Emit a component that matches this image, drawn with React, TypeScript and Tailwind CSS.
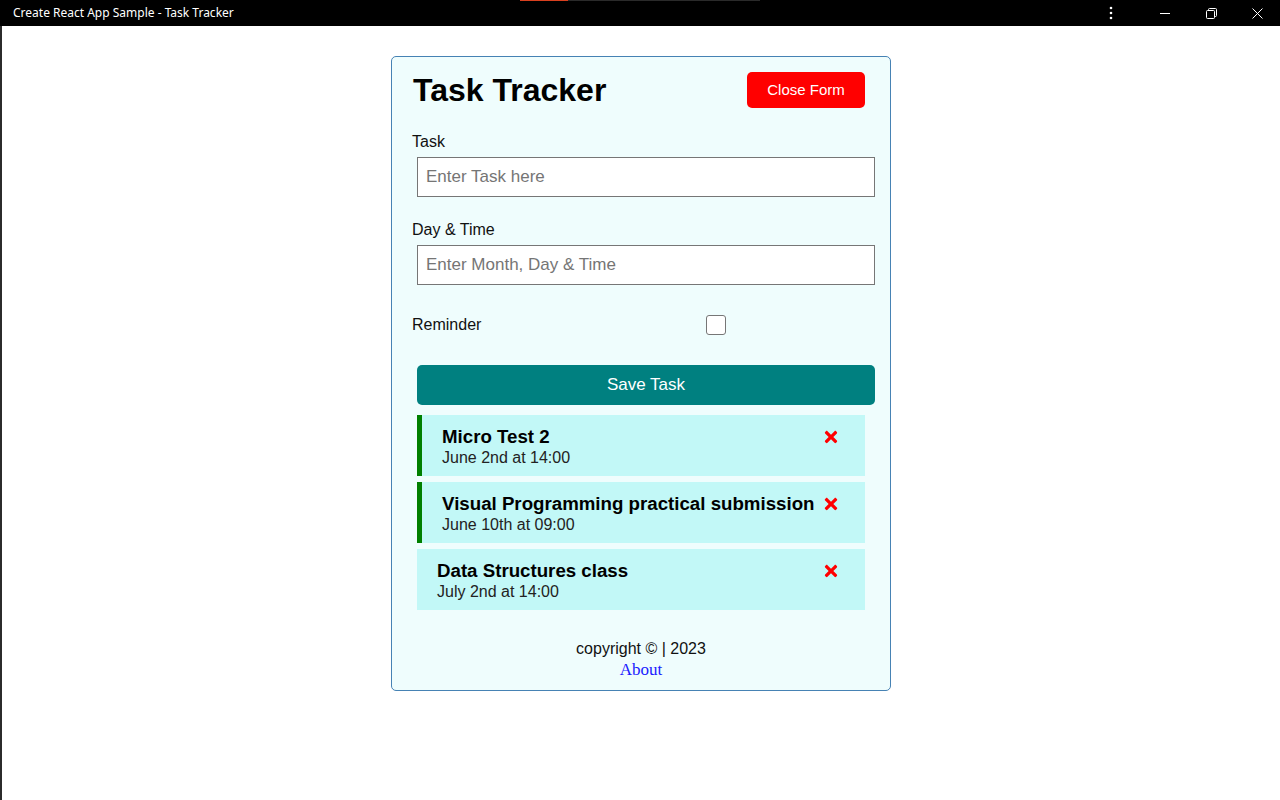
import { FaTimes } from "react-icons/fa";

const tasks = [
  { id: 1, text: "Micro Test 2", day: "June 2nd at 14:00", reminder: true },
  { id: 2, text: "Visual Programming practical submission", day: "June 10th at 09:00", reminder: true },
  { id: 3, text: "Data Structures class", day: "July 2nd at 14:00", reminder: false },
];

function TitleBar() {
  return (
    <div className="relative h-[26px] bg-black flex items-center justify-between text-white">
      {/* tab strip remnants at the top */}
      <div className="absolute top-0 left-[520px] w-[48px] h-px bg-[#d9401f]" />
      <div className="absolute top-0 left-[568px] w-[192px] h-px bg-[#2a2a2a]" />
      <span className="pl-[13px] text-[12px] font-['Segoe_UI','Noto_Sans',sans-serif]">
        Create React App Sample - Task Tracker
      </span>
      <div className="flex items-center h-full">
        <div className="w-[46px] h-full flex items-center justify-center mr-[8px]">
          <svg width="4" height="14" viewBox="0 0 4 14" fill="white">
            <circle cx="2" cy="2" r="1.3" />
            <circle cx="2" cy="7" r="1.3" />
            <circle cx="2" cy="12" r="1.3" />
          </svg>
        </div>
        <div className="w-[46px] h-full flex items-center justify-center">
          <svg width="10" height="10" viewBox="0 0 10 10" stroke="white" fill="none">
            <path d="M0 5.5h10" />
          </svg>
        </div>
        <div className="w-[46px] h-full flex items-center justify-center">
          <svg width="11" height="11" viewBox="0 0 11 11" stroke="white" fill="none">
            <rect x="0.5" y="2.5" width="8" height="8" rx="1" />
            <path d="M2.5 2.5V1.5a1 1 0 0 1 1-1h6a1 1 0 0 1 1 1v6a1 1 0 0 1-1 1h-1" />
          </svg>
        </div>
        <div className="w-[46px] h-full flex items-center justify-center">
          <svg width="11" height="11" viewBox="0 0 11 11" stroke="white" fill="none">
            <path d="M0.5 0.5l10 10M10.5 0.5l-10 10" />
          </svg>
        </div>
      </div>
    </div>
  );
}

function Task({ task }: { task: (typeof tasks)[number] }) {
  return (
    <div
      className={`mx-[5px] h-[61px] bg-[#c2f8f7] py-[10px] ${
        task.reminder ? "border-l-[5px] border-[#008000] pl-[20px]" : "pl-[20px]"
      } pr-[20px]`}
    >
      <h3 className="flex items-center justify-between text-[18.7px] font-bold leading-[23px] text-black">
        {task.text}
        <FaTimes className="text-[#ff0000] text-[18px] mr-[5px]" />
      </h3>
      <p className="text-[16px] leading-[19px] text-[#222]">{task.day}</p>
    </div>
  );
}

export default function App() {
  return (
    <div className="w-[1280px] h-[800px] flex flex-col bg-white overflow-hidden font-['Liberation_Sans',Arial,sans-serif]">
      <TitleBar />
      <div className="flex flex-1">
        <div className="w-[2px] bg-[#2b2b2b]" />
        <div className="flex-1 pt-[30px]">
          <div className="ml-[389px] w-[500px] h-[635px] border border-[#4682b4] rounded-[5px] bg-[#effdfd] px-[20px] pt-[10px]">
            <header className="flex items-center justify-between mb-[20px]">
              <h1 className="text-[32px] font-bold leading-[37px] text-black pl-[1px]">Task Tracker</h1>
              <button className="m-[5px] mr-[5px] px-[20px] h-[36px] w-[118px] bg-[#ff0000] text-white text-[15px] rounded-[5px]">
                Close Form
              </button>
            </header>

            <form className="w-full">
              <div className="mb-[24px]">
                <label className="block text-[16px] leading-[18px] text-[#111]">Task</label>
                <input
                  type="text"
                  placeholder="Enter Task here"
                  className="block w-[458px] h-[40px] mt-[6px] ml-[5px] px-[8px] text-[17px] bg-white border border-[#767676] placeholder:text-[#757575] outline-none"
                />
              </div>
              <div className="mb-[20px]">
                <label className="block text-[16px] leading-[18px] text-[#111]">Day &amp; Time</label>
                <input
                  type="text"
                  placeholder="Enter Month, Day & Time"
                  className="block w-[458px] h-[40px] mt-[6px] ml-[5px] px-[8px] text-[17px] bg-white border border-[#767676] placeholder:text-[#757575] outline-none"
                />
              </div>
              <div className="flex items-center h-[30px] mt-[25px]">
                <label className="w-[152px] text-[16px] text-[#111]">Reminder</label>
                <div className="flex-1 flex justify-center pr-[3px]">
                  <span className="block w-[20px] h-[20px] bg-white border border-[#767676] rounded-[3px]" />
                </div>
              </div>
              <button
                type="button"
                className="block w-[458px] h-[40px] mt-[25px] ml-[5px] bg-[#008080] text-white text-[17px] rounded-[5px]"
              >
                Save Task
              </button>
            </form>

            <div className="mt-[10px] flex flex-col gap-[6px]">
              {tasks.map((t) => (
                <Task key={t.id} task={t} />
              ))}
            </div>

            <footer className="mt-[30px] text-center">
              <p className="text-[16px] leading-[18px] text-[#111]">copyright © | 2023</p>
              <a href="#" className="text-[17px] leading-[20px] text-[#1a1aff] font-['Liberation_Serif',serif]">
                About
              </a>
            </footer>
          </div>
        </div>
      </div>
    </div>
  );
}
